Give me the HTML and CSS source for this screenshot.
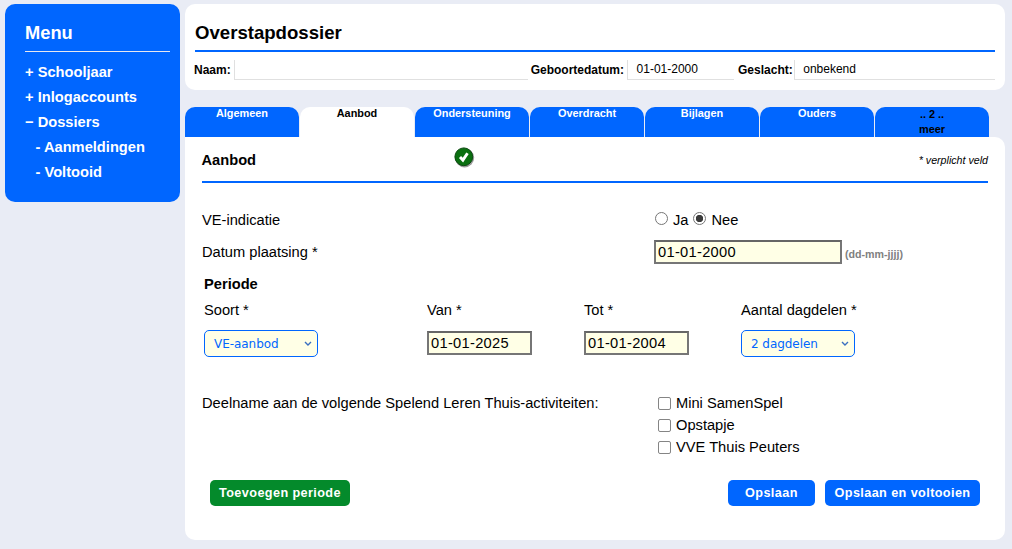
FILE: index.html
```html
<!DOCTYPE html>
<html lang="nl">
<head>
<meta charset="utf-8">
<title>Overstapdossier</title>
<link rel="stylesheet" href="styles.css">
</head>
<body>
<div class="page">
  <nav class="sidebar">
    <h2 class="menu-title">Menu</h2>
    <ul class="menu">
      <li>+ Schooljaar</li>
      <li>+ Inlogaccounts</li>
      <li>&minus; Dossiers</li>
      <li class="sub">- Aanmeldingen</li>
      <li class="sub">- Voltooid</li>
    </ul>
  </nav>
  <main class="main">
    <header class="head-card">
      <h1 class="title">Overstapdossier</h1>
      <div class="info">
        <span class="info-label">Naam:</span><span class="info-value v-naam"></span>
        <span class="info-label">Geboortedatum:</span><span class="info-value v-date">01-01-2000</span>
        <span class="info-label">Geslacht:</span><span class="info-value v-sex">onbekend</span>
      </div>
    </header>
    <div class="tabs">
      <div class="tab">Algemeen</div>
      <div class="tab active">Aanbod</div>
      <div class="tab">Ondersteuning</div>
      <div class="tab">Overdracht</div>
      <div class="tab">Bijlagen</div>
      <div class="tab">Ouders</div>
      <div class="tab more">.. 2 ..<br>meer</div>
    </div>
    <section class="card">
      <div class="card-head">
        <span class="card-title">Aanbod</span>
        <svg class="ok" width="21" height="21" viewBox="0 0 21 21">
          <circle cx="10.6" cy="10.8" r="9.6" fill="#9a9a9a"/>
          <circle cx="9.8" cy="9.8" r="8.9" fill="#0a6f10" stroke="#0b4a10" stroke-width="1"/>
          <path d="M6 10l2.9 3.1 4.6-6.9" fill="none" stroke="#fff" stroke-width="2.9"/>
        </svg>
        <span class="required">* verplicht veld</span>
      </div>
      <div class="row r-ve">
        <span>VE-indicatie</span>
        <span class="control">
          <input type="radio" name="ve" class="radio"> <span>Ja</span>
          <input type="radio" name="ve" class="radio" checked> <span>Nee</span>
        </span>
      </div>
      <div class="row r-date">
        <span>Datum plaatsing *</span>
        <span class="control">
          <input class="date wide" type="text" value="01-01-2000">
          <span class="hint">(dd-mm-jjjj)</span>
        </span>
      </div>
      <div class="periode-title">Periode</div>
      <div class="periode">
        <div class="col c1"><label>Soort *</label>
          <select class="sel"><option>VE-aanbod</option></select></div>
        <div class="col c2"><label>Van *</label>
          <input class="date" type="text" value="01-01-2025"></div>
        <div class="col c3"><label>Tot *</label>
          <input class="date" type="text" value="01-01-2004"></div>
        <div class="col c4"><label>Aantal dagdelen *</label>
          <select class="sel"><option>2 dagdelen</option></select></div>
      </div>
      <div class="row r-act">
        <span>Deelname aan de volgende Spelend Leren Thuis-activiteiten:</span>
        <div class="checks">
          <label class="check"><input type="checkbox"><span>Mini SamenSpel</span></label>
          <label class="check"><input type="checkbox"><span>Opstapje</span></label>
          <label class="check"><input type="checkbox"><span>VVE Thuis Peuters</span></label>
        </div>
      </div>
      <div class="actions">
        <button class="btn green">Toevoegen periode</button>
        <span class="right">
          <button class="btn save">Opslaan</button>
          <button class="btn finish">Opslaan en voltooien</button>
        </span>
      </div>
    </section>
  </main>
</div>
</body>
</html>
```
FILE: styles.css
```css
* { box-sizing: border-box; }
html, body { margin: 0; height: 100%; }
body { background: #e9ecf5; font-family: "Liberation Sans", Arial, sans-serif; color: #000; font-size: 14.67px; overflow: hidden; }
.page { display: flex; align-items: flex-start; gap: 5px; padding: 4px 7px 0 5px; }
.sidebar { width: 175px; height: 198px; background: #0066ff; border-radius: 10px; padding: 17px 10px 0 20px; color: #fff; flex: none; }
.menu-title { margin: 0; font-size: 18.3px; line-height: 24px; font-weight: 700; padding-bottom: 6px; border-bottom: 1.5px solid #e8e8f0; }
.menu { list-style: none; margin: 8px 0 0; padding: 0; font-weight: 700; font-size: 14.67px; }
.menu li { height: 25px; line-height: 25px; }
.menu .sub { padding-left: 10.5px; }
.main { width: 820px; flex: none; }
.head-card { background: #fff; border-radius: 10px; height: 86px; padding: 17px 10px 0; }
.title { margin: 0; font-size: 18.6px; line-height: 24px; font-weight: 700; height: 31px; border-bottom: 2px solid #0066ff; }
.info { display: flex; margin-top: 8px; height: 20px; font-size: 12px; }
.info-label { font-weight: 700; line-height: 21px; white-space: nowrap; margin-right: 3px; margin-left: -1px; }
.info-value { border-left: 1px solid #e0e0e0; border-bottom: 1px solid #e0e0e0; padding-left: 8px; line-height: 18px; height: 20px; }
.v-naam { width: 294px; margin-right: 4px; }
.v-date { width: 107px; margin-right: 5px; padding-left: 8.5px; }
.v-sex { flex: 1; margin-left: -2px; padding-left: 8.5px; }
.tabs { display: flex; gap: 1px; margin-top: 17px; height: 30px; }
.tab { width: 114px; height: 30px; background: #0066ff; color: #fff; border-radius: 10px 10px 0 0; text-align: center; font-size: 10.9px; font-weight: 700; line-height: 13px; }
.tab.active { background: #fff; color: #000; }
.tab.more { color: #000; line-height: 15px; }
.card { background: #fff; border-radius: 0 10px 10px 10px; height: 403px; padding: 0 17px; }
.card-head { height: 46px; border-bottom: 2px solid #0066ff; display: flex; align-items: center; }
.card-title { font-weight: 700; font-size: 14.67px; width: 252px; margin-left: -0.5px; padding-top: 2px; }
.ok { margin-bottom: 3px; }
.required { margin-left: auto; font-style: italic; font-size: 10.67px; padding-top: 2px; }
.row { display: flex; }
.row > :first-child { width: 452px; flex: none; }
.r-ve { margin-top: 27px; height: 20px; line-height: 20px; }
.r-date { margin-top: 9px; height: 26px; align-items: center; }
.control { display: flex; align-items: center; }
.radio { appearance: none; margin: 0 5px 3px 1px; width: 13px; height: 13px; border: 1px solid #767676; border-radius: 50%; background: #fff; }
.radio:checked { background: radial-gradient(circle, #3b3b3b 0 3.4px, #fff 4px); }
.control span + .radio { margin-left: 5px; }
.date { height: 24px; background: #ffffe6; border: 2px solid #767676; border-top-color: #666; font: 14.67px "Liberation Sans", Arial, sans-serif; padding: 0 2px; width: 105px; border-radius: 0; color: #000; outline: none; letter-spacing: 0.3px; }
.date.wide { width: 188px; }
.hint { font-size: 10.67px; font-weight: 700; color: #808080; margin-left: 3px; margin-top: 3px; }
.periode-title { font-weight: 700; margin: 9px 0 0 2px; height: 20px; line-height: 20px; }
.periode { display: flex; margin: 6px 0 0 2px; }
.col label { display: block; height: 20px; line-height: 20px; margin-bottom: 10px; }
.c1 { width: 223px; }
.c2, .c3 { width: 157px; }
.col .date { display: block; margin-top: 11px; }
.sel { appearance: none; width: 114px; height: 27px; border: 1px solid #0066ff; border-radius: 5px; background: #ffffe6 url("data:image/svg+xml,%3Csvg xmlns='http://www.w3.org/2000/svg' width='8' height='6'%3E%3Cpath d='M1 1l3 3 3-3' fill='none' stroke='%233a6fc0' stroke-width='1.4'/%3E%3C/svg%3E") no-repeat right 5px center; color: #0066ff; font: 12px "DejaVu Sans", sans-serif; letter-spacing: -0.05px; padding: 0 0 0 9px; outline: none; }
.r-act { margin-top: 36px; }
.r-act > :first-child { line-height: 20px; }
.checks { display: flex; flex-direction: column; gap: 2px; margin-left: 4px; }
.check { display: flex; align-items: center; height: 20px; }
.check input { appearance: none; margin: 0 5px 0 0; width: 13px; height: 13px; border: 1px solid #858585; border-radius: 2px; background: #fff; }
.actions { display: flex; justify-content: space-between; margin-top: 23px; padding: 0 8px; }
.btn { height: 26px; padding: 0; border: 0; border-radius: 5px; background: #0066ff; color: #fff; font: 700 12.67px "Liberation Sans", Arial, sans-serif; letter-spacing: 0.4px; }
.btn.green { background: #048a2b; width: 140px; }
.btn.save { width: 87px; margin-right: 6px; }
.btn.finish { width: 155px; }
```
